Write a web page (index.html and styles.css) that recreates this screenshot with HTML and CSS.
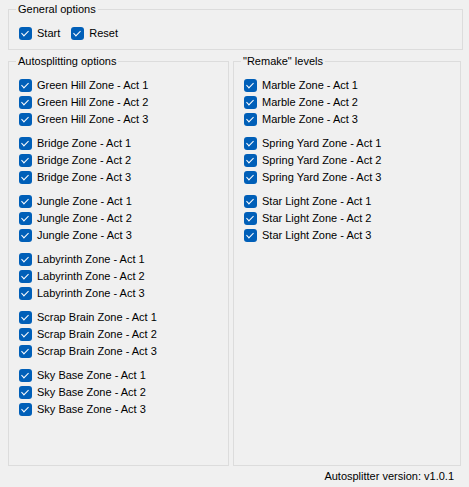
FILE: index.html
```html
<!DOCTYPE html>
<html>
<head>
<meta charset="utf-8">
<link rel="stylesheet" href="styles.css">
</head>
<body>
<div class="page">
  <fieldset class="box general">
    <legend>General options</legend>
    <div class="inline">
      <label class="cb start"><span class="tick"></span>Start</label>
      <label class="cb"><span class="tick"></span>Reset</label>
    </div>
  </fieldset>

  <div class="columns">
    <fieldset class="box col-left">
      <legend>Autosplitting options</legend>
      <div class="list">
        <div class="grp">
          <label class="cb"><span class="tick"></span>Green Hill Zone - Act 1</label>
          <label class="cb"><span class="tick"></span>Green Hill Zone - Act 2</label>
          <label class="cb"><span class="tick"></span>Green Hill Zone - Act 3</label>
        </div>
        <div class="grp">
          <label class="cb"><span class="tick"></span>Bridge Zone - Act 1</label>
          <label class="cb"><span class="tick"></span>Bridge Zone - Act 2</label>
          <label class="cb"><span class="tick"></span>Bridge Zone - Act 3</label>
        </div>
        <div class="grp">
          <label class="cb"><span class="tick"></span>Jungle Zone - Act 1</label>
          <label class="cb"><span class="tick"></span>Jungle Zone - Act 2</label>
          <label class="cb"><span class="tick"></span>Jungle Zone - Act 3</label>
        </div>
        <div class="grp">
          <label class="cb"><span class="tick"></span>Labyrinth Zone - Act 1</label>
          <label class="cb"><span class="tick"></span>Labyrinth Zone - Act 2</label>
          <label class="cb"><span class="tick"></span>Labyrinth Zone - Act 3</label>
        </div>
        <div class="grp">
          <label class="cb"><span class="tick"></span>Scrap Brain Zone - Act 1</label>
          <label class="cb"><span class="tick"></span>Scrap Brain Zone - Act 2</label>
          <label class="cb"><span class="tick"></span>Scrap Brain Zone - Act 3</label>
        </div>
        <div class="grp">
          <label class="cb"><span class="tick"></span>Sky Base Zone - Act 1</label>
          <label class="cb"><span class="tick"></span>Sky Base Zone - Act 2</label>
          <label class="cb"><span class="tick"></span>Sky Base Zone - Act 3</label>
        </div>
      </div>
    </fieldset>

    <fieldset class="box col-right">
      <legend>"Remake" levels</legend>
      <div class="list">
        <div class="grp">
          <label class="cb"><span class="tick"></span>Marble Zone - Act 1</label>
          <label class="cb"><span class="tick"></span>Marble Zone - Act 2</label>
          <label class="cb"><span class="tick"></span>Marble Zone - Act 3</label>
        </div>
        <div class="grp">
          <label class="cb"><span class="tick"></span>Spring Yard Zone - Act 1</label>
          <label class="cb"><span class="tick"></span>Spring Yard Zone - Act 2</label>
          <label class="cb"><span class="tick"></span>Spring Yard Zone - Act 3</label>
        </div>
        <div class="grp">
          <label class="cb"><span class="tick"></span>Star Light Zone - Act 1</label>
          <label class="cb"><span class="tick"></span>Star Light Zone - Act 2</label>
          <label class="cb"><span class="tick"></span>Star Light Zone - Act 3</label>
        </div>
      </div>
    </fieldset>
  </div>

  <div class="footer">Autosplitter version: v1.0.1</div>
</div>
</body>
</html>
```

FILE: styles.css
```css
html, body {
  margin: 0;
  padding: 0;
  background: #f0f0f0;
}

body {
  font-family: "Liberation Sans", Arial, sans-serif;
  font-size: 11px;
  color: #000;
}

.page {
  width: 469px;
  height: 487px;
  padding: 2px 0 0 8px;
  box-sizing: border-box;
  display: flex;
  flex-direction: column;
}

.box {
  margin: 0;
  padding: 0 0 0 9px;
  border: 1px solid #dcdcdc;
  box-sizing: border-box;
  min-width: 0;
}

.box legend {
  padding: 0 2px;
  margin-left: -2px;
  height: 15px;
  line-height: 15px;
}

.general {
  width: 455px;
  padding-top: 8px;
  padding-bottom: 7px;
}

.inline {
  display: flex;
}

.columns {
  display: flex;
  gap: 4px;
  margin-top: 4px;
  height: 412px;
}

.col-left {
  width: 221px;
  padding-top: 8px;
}

.col-right {
  width: 228px;
  padding-top: 8px;
}

.list {
  display: flex;
  flex-direction: column;
  gap: 7px;
}

.grp {
  display: flex;
  flex-direction: column;
}

.cb {
  display: flex;
  align-items: center;
  height: 17px;
  line-height: 17px;
  padding-left: 1px;
  white-space: nowrap;
}

.cb.start {
  margin-right: 10px;
}

.tick {
  width: 13px;
  height: 13px;
  border-radius: 3px;
  background: #005fb8;
  margin-right: 5px;
  flex: none;
  position: relative;
}

.tick::after {
  content: "";
  position: absolute;
  left: 4px;
  top: 2px;
  width: 3px;
  height: 6px;
  border: solid #fff;
  border-width: 0 1px 1px 0;
  transform: rotate(45deg);
}

.footer {
  margin-top: 3px;
  width: 446px;
  text-align: right;
  height: 15px;
  line-height: 15px;
}
```
